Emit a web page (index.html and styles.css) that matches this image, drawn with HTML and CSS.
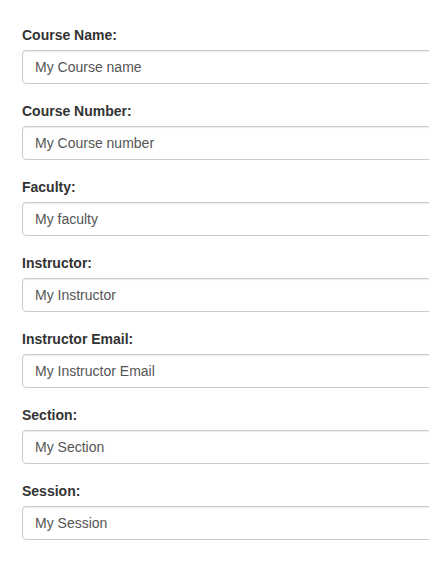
FILE: index.html
```html
<!DOCTYPE html>
<html>
<head>
<meta charset="utf-8">
<link rel="stylesheet" href="styles.css">
</head>
<body>
<form class="form">
  <div class="group"><label class="label">Course Name:</label><input class="field" type="text" value="My Course name"></div>
  <div class="group"><label class="label">Course Number:</label><input class="field" type="text" value="My Course number"></div>
  <div class="group"><label class="label">Faculty:</label><input class="field" type="text" value="My faculty"></div>
  <div class="group"><label class="label">Instructor:</label><input class="field" type="text" value="My Instructor"></div>
  <div class="group"><label class="label">Instructor Email:</label><input class="field" type="text" value="My Instructor Email"></div>
  <div class="group"><label class="label">Section:</label><input class="field" type="text" value="My Section"></div>
  <div class="group"><label class="label">Session:</label><input class="field" type="text" value="My Session"></div>
</form>
</body>
</html>
```
FILE: styles.css
```css
html, body {
  margin: 0;
  padding: 0;
  background: #fff;
  overflow: hidden;
}
body {
  font-family: "Liberation Sans", Arial, sans-serif;
  font-size: 14px;
  line-height: 20px;
  color: #333;
}
.form {
  padding: 25px 0 0 22px;
  width: 520px;
}
.group {
  display: flex;
  flex-direction: column;
  margin-bottom: 17px;
}
.label {
  font-weight: bold;
  margin-bottom: 5px;
  line-height: 20px;
}
.field {
  box-sizing: border-box;
  height: 34px;
  width: 100%;
  padding: 6px 12px;
  font-family: inherit;
  font-size: 14px;
  line-height: 20px;
  color: #555;
  background: #fff;
  border: 1px solid #ccc;
  border-radius: 4px;
  box-shadow: inset 0 1px 1px rgba(0,0,0,.075);
  outline: none;
  margin: 0;
}
```
